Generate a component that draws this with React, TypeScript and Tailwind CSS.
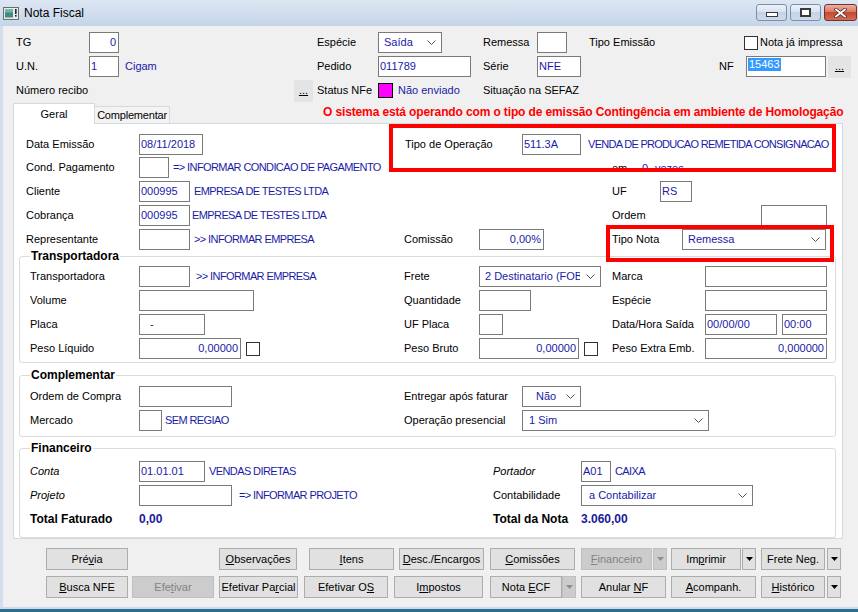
import React from "react";

type P = { w?: string; children?: React.ReactNode; cls?: string };

const VAL = "text-[#1a1aa8]";

function L({ w = "", children, cls = "" }: P) {
  return <div className={`${w} shrink-0 whitespace-nowrap ${cls}`}>{children}</div>;
}

function Inp({ w = "", children, right, cls = "" }: P & { right?: boolean }) {
  return (
    <div
      className={`${w} h-[21px] shrink-0 border border-[#7a7a7a] bg-white flex items-center ${
        right ? "justify-end pr-[2px]" : "pl-[1px]"
      } text-[#1a1aa8] whitespace-nowrap overflow-hidden ${cls}`}
    >
      {children}
    </div>
  );
}

function Chev() {
  return (
    <svg width="9" height="5" viewBox="0 0 9 5">
      <path d="M0.5 0.5 L4.5 4.5 L8.5 0.5" fill="none" stroke="#555" strokeWidth="1" />
    </svg>
  );
}

function Sel({ w = "", children, pl = "pl-[5px]" }: P & { pl?: string }) {
  return (
    <div className={`${w} h-[21px] shrink-0 border border-[#7a7a7a] bg-white flex items-center text-[#1a1aa8]`}>
      <div className={`flex-1 overflow-hidden whitespace-nowrap ${pl}`}>{children}</div>
      <div className="w-[20px] shrink-0 flex justify-center">
        <Chev />
      </div>
    </div>
  );
}

function Desc({ children, cls = "ml-[4px]" }: P) {
  return <span className={`${cls} text-[#1a1aa8] tracking-[-0.6px] whitespace-nowrap`}>{children}</span>;
}

function Chk({ cls = "" }: { cls?: string }) {
  return <div className={`w-[14px] h-[14px] shrink-0 border border-[#333] bg-white ${cls}`} />;
}

function Row({ children, cls = "" }: P) {
  return <div className={`flex items-center h-[21px] ${cls}`}>{children}</div>;
}

function Dots({ w = "w-[23px]", cls = "" }: { w?: string; cls?: string }) {
  return (
    <div className={`${w} h-[22px] shrink-0 bg-[#e4e4e4] flex items-center justify-center ${cls}`}>
      <span className="underline leading-none">...</span>
    </div>
  );
}

function Btn({ w = "", ml = "", children, disabled }: { w: string; ml?: string; children: React.ReactNode; disabled?: boolean }) {
  return (
    <div
      className={`${w} ${ml} h-[22px] shrink-0 flex items-center justify-center whitespace-nowrap border ${
        disabled ? "bg-[#cccccc] border-[#bfbfbf] text-[#838383]" : "bg-[#e1e1e1] border-[#adadad] text-black"
      }`}
    >
      <span className="whitespace-pre">{children}</span>
    </div>
  );
}

function Arrow({ ml = "", disabled }: { ml?: string; disabled?: boolean }) {
  return (
    <div
      className={`w-[14px] ${ml} h-[22px] shrink-0 flex items-center justify-center border ${
        disabled ? "bg-[#cccccc] border-[#bfbfbf]" : "bg-[#e1e1e1] border-[#adadad]"
      }`}
    >
      <svg width="7" height="4" viewBox="0 0 7 4">
        <path d="M0 0 H7 L3.5 4 Z" fill={disabled ? "#8e8e8e" : "#000"} />
      </svg>
    </div>
  );
}

function Group({ title, children, cls = "", inner = "" }: P & { title: string; inner?: string }) {
  return (
    <fieldset className={`ml-[5px] w-[817px] border border-[#dcdcdc] rounded-[3px] ${cls}`}>
      <legend className="ml-[10px] px-[1px] font-bold text-[12px] leading-[13px]">{title}</legend>
      <div className={`pl-[10px] ${inner}`}>{children}</div>
    </fieldset>
  );
}

const U = ({ children }: { children: React.ReactNode }) => <span className="underline">{children}</span>;

export default function App() {
  return (
    <div className="w-[858px] h-[612px] flex flex-col overflow-hidden font-['Liberation_Sans',Arial,sans-serif] text-[11px] text-black">
      {/* Title bar */}
      <div className="h-[26px] shrink-0 flex items-center bg-[linear-gradient(#dde7f3,#c5d5e9)]">
        <svg width="16" height="13" viewBox="0 0 16 13" className="ml-[3px]">
          <rect x="0.5" y="0.5" width="15" height="12" fill="#e9e9e9" stroke="#6d6d6d" />
          <rect x="2" y="2.5" width="8" height="8" fill="#3f8c86" />
          <rect x="2" y="2.5" width="8" height="3" fill="#6fb3ad" />
          <rect x="12" y="2" width="1.6" height="5" fill="#222" />
          <rect x="12" y="8" width="1.6" height="1.6" fill="#222" />
        </svg>
        <span className="ml-[5px] text-[12px] text-black">Nota Fiscal</span>
        <div className="ml-auto flex items-start self-start mt-[4px] mr-[1px]">
          <div className="w-[31px] h-[17px] rounded-[3px] border border-[#7f8ea8] bg-[linear-gradient(#edf2f9_0%,#d9e3f0_45%,#c4d3e7_50%,#cddaeb_100%)] flex items-end justify-center pb-[3px]">
            <svg width="12" height="5" viewBox="0 0 12 5">
              <rect x="0.5" y="0.5" width="11" height="4" fill="#fff" stroke="#3a3a3a" />
            </svg>
          </div>
          <div className="ml-[3px] w-[31px] h-[17px] rounded-[3px] border border-[#7f8ea8] bg-[linear-gradient(#edf2f9_0%,#d9e3f0_45%,#c4d3e7_50%,#cddaeb_100%)] flex items-center justify-center">
            <svg width="11" height="9" viewBox="0 0 11 9">
              <rect x="1" y="1" width="9" height="7" fill="#fff" stroke="#3a3a3a" strokeWidth="2" />
              <rect x="3" y="3.5" width="5" height="2.5" fill="#fff" />
            </svg>
          </div>
          <div className="ml-[3px] w-[33px] h-[17px] rounded-[3px] border border-[#7a3125] bg-[linear-gradient(#eab0a2_0%,#d97a64_45%,#c44a32_50%,#d26c52_100%)] flex items-center justify-center">
            <svg width="13" height="10" viewBox="0 0 13 10">
              <path d="M2 1.5 L11 8.5 M11 1.5 L2 8.5" stroke="#4a2a25" strokeWidth="3.4" strokeLinecap="square" />
              <path d="M2 1.5 L11 8.5 M11 1.5 L2 8.5" stroke="#fff" strokeWidth="1.8" strokeLinecap="square" />
            </svg>
          </div>
        </div>
      </div>

      {/* Body */}
      <div className="flex-1 bg-[#f0f0f0] shadow-[inset_3px_0_0_#d3dfee] flex flex-col pt-[6px]">
        {/* Header row 1 */}
        <Row cls="pl-[16px]">
          <L w="w-[73px]">TG</L>
          <Inp w="w-[30px]" right>
            0
          </Inp>
          <L w="w-[198px]" />
          <L w="w-[61px]">Espécie</L>
          <Sel w="w-[64px]">Saída</Sel>
          <L w="w-[41px]" />
          <L w="w-[54px]">Remessa</L>
          <Inp w="w-[30px]" />
          <L w="w-[22px]" />
          <L w="w-[155px]">Tipo Emissão</L>
          <Chk />
          <L cls="ml-[2px]">Nota já impressa</L>
        </Row>
        {/* Header row 2 */}
        <Row cls="pl-[16px] mt-[3px]">
          <L w="w-[73px]">U.N.</L>
          <Inp w="w-[30px]">1</Inp>
          <L w="w-[198px]" cls={`pl-[6px] ${VAL}`}>
            Cigam
          </L>
          <L w="w-[61px]">Pedido</L>
          <Inp w="w-[93px]">011789</Inp>
          <L w="w-[12px]" />
          <L w="w-[54px]">Série</L>
          <Inp w="w-[44px]">NFE</Inp>
          <L w="w-[138px]" />
          <L w="w-[27px]">NF</L>
          <div className="w-[80px] h-[21px] shrink-0 border border-[#7a7a7a] bg-white flex items-start pt-[1px] pl-[1px]">
            <span className="bg-[#3399ff] text-white leading-[13px] px-[1px]">15463</span>
          </div>
          <Dots cls="ml-[2px]" />
        </Row>
        {/* Header row 3 */}
        <Row cls="pl-[16px] mt-[3px]">
          <L w="w-[278px]">Número recibo</L>
          <Dots w="w-[19px]" />
          <L w="w-[4px]" />
          <L w="w-[61px]">Status NFe</L>
          <div className="w-[15px] h-[15px] shrink-0 border border-black bg-[#ff00ff]" />
          <L w="w-[85px]" cls={`ml-[5px] ${VAL}`}>
            Não enviado
          </L>
          <L>Situação na SEFAZ</L>
        </Row>

        {/* Tabs */}
        <div className="mt-[2px] h-[20px] pl-[13px] flex items-end relative z-10">
          <div className="w-[82px] h-[21px] -mb-[1px] bg-white border border-b-0 border-[#d9d9d9] flex items-center justify-center">
            Geral
          </div>
          <div className="w-[75px] h-[17px] bg-[#f3f3f3] border border-l-0 border-b-0 border-[#d9d9d9] flex items-center justify-center tracking-[-0.2px] whitespace-nowrap">
            Complementar
          </div>
          <div className="self-start mt-[3px] ml-[153px] leading-[13px] font-bold text-[12px] tracking-[-0.13px] text-[#ff0000] whitespace-nowrap">
            O sistema está operando com o tipo de emissão Contingência em ambiente de Homologação
          </div>
        </div>

        {/* Panel */}
        <div className="ml-[13px] w-[830px] h-[416px] shrink-0 border border-[#d3d9e2] bg-white relative pt-[10px]">
          <div className="pl-[12px]">
            <Row>
              <L w="w-[113px]">Data Emissão</L>
              <Inp w="w-[64px]">08/11/2018</Inp>
              <L w="w-[202px]" />
              <L w="w-[117px]">Tipo de Operação</L>
              <Inp w="w-[59px]">511.3A</Inp>
              <span className="ml-[7px] text-[#1a1aa8] tracking-[-0.7px] whitespace-nowrap">
                VENDA DE PRODUCAO REMETIDA CONSIGNACAO
              </span>
            </Row>
            <Row cls="mt-[2px]">
              <div className="w-[586px] shrink-0 flex items-center">
                <L w="w-[113px]">Cond. Pagamento</L>
                <Inp w="w-[30px]" />
                <Desc>=&gt; INFORMAR CONDICAO DE PAGAMENTO</Desc>
              </div>
              <L w="w-[30px]" cls="mt-[1px]">
                em
              </L>
              <L w="w-[13px]" cls={`mt-[1px] ${VAL}`}>
                0
              </L>
              <L cls={`mt-[1px] ${VAL}`}>vezes</L>
            </Row>
            <Row cls="mt-[3px]">
              <div className="w-[586px] shrink-0 flex items-center">
                <L w="w-[113px]">Cliente</L>
                <Inp w="w-[51px]">000995</Inp>
                <Desc>EMPRESA DE TESTES LTDA</Desc>
              </div>
              <L w="w-[48px]">UF</L>
              <Inp w="w-[32px]">RS</Inp>
            </Row>
            <Row cls="mt-[3px]">
              <div className="w-[586px] shrink-0 flex items-center">
                <L w="w-[113px]">Cobrança</L>
                <Inp w="w-[51px]">000995</Inp>
                <Desc cls="ml-[2px] -mt-[1px]">EMPRESA DE TESTES LTDA</Desc>
              </div>
              <L w="w-[149px]">Ordem</L>
              <Inp w="w-[66px]" />
            </Row>
            <Row cls="mt-[3px]">
              <div className="w-[378px] shrink-0 flex items-center">
                <L w="w-[113px]">Representante</L>
                <Inp w="w-[51px]" />
                <Desc cls="ml-[4px] -mt-[1px]">&gt;&gt; INFORMAR EMPRESA</Desc>
              </div>
              <L w="w-[75px]">Comissão</L>
              <Inp w="w-[65px]" right>
                0,00%
              </Inp>
              <L w="w-[68px]" />
              <L w="w-[70px]">Tipo Nota</L>
              <Sel w="w-[144px]">Remessa</Sel>
            </Row>
          </div>

          <Group title="Transportadora" inner="pt-[3px] pb-[3px]">
            <Row>
              <div className="w-[374px] shrink-0 flex items-center">
                <L w="w-[109px]">Transportadora</L>
                <Inp w="w-[51px]" />
                <Desc cls="ml-[6px]">&gt;&gt; INFORMAR EMPRESA</Desc>
              </div>
              <L w="w-[75px]">Frete</L>
              <Sel w="w-[122px]">2 Destinatario (FOB)</Sel>
              <L w="w-[11px]" />
              <L w="w-[93px]">Marca</L>
              <Inp w="w-[122px]" />
            </Row>
            <Row cls="mt-[3px]">
              <div className="w-[374px] shrink-0 flex items-center">
                <L w="w-[109px]">Volume</L>
                <Inp w="w-[115px]" />
              </div>
              <L w="w-[75px]">Quantidade</L>
              <Inp w="w-[52px]" />
              <L w="w-[81px]" />
              <L w="w-[93px]">Espécie</L>
              <Inp w="w-[122px]" />
            </Row>
            <Row cls="mt-[3px]">
              <div className="w-[374px] shrink-0 flex items-center">
                <L w="w-[109px]">Placa</L>
                <Inp w="w-[66px]" cls="pl-[10px]">
                  -
                </Inp>
              </div>
              <L w="w-[75px]">UF Placa</L>
              <Inp w="w-[24px]" />
              <L w="w-[109px]" />
              <L w="w-[93px]">Data/Hora Saída</L>
              <Inp w="w-[72px]">00/00/00</Inp>
              <Inp w="w-[45px]" cls="ml-[5px]">
                00:00
              </Inp>
            </Row>
            <Row cls="mt-[3px]">
              <div className="w-[374px] shrink-0 flex items-center">
                <L w="w-[109px]">Peso Líquido</L>
                <Inp w="w-[102px]" right>
                  0,00000
                </Inp>
                <Chk cls="ml-[5px]" />
              </div>
              <L w="w-[75px]">Peso Bruto</L>
              <Inp w="w-[100px]" right>
                0,00000
              </Inp>
              <Chk cls="ml-[5px]" />
              <L w="w-[14px]" />
              <L w="w-[93px]">Peso Extra Emb.</L>
              <Inp w="w-[122px]" right>
                0,000000
              </Inp>
            </Row>
          </Group>

          <Group title="Complementar" cls="mt-[6px]" inner="pt-[4px] pb-[5px]">
            <Row>
              <div className="w-[374px] shrink-0 flex items-center">
                <L w="w-[109px]">Ordem de Compra</L>
                <Inp w="w-[93px]" />
              </div>
              <L w="w-[118px]">Entregar após faturar</L>
              <Sel w="w-[59px]" pl="pl-[13px]">
                Não
              </Sel>
            </Row>
            <Row cls="mt-[3px]">
              <div className="w-[374px] shrink-0 flex items-center">
                <L w="w-[109px]">Mercado</L>
                <Inp w="w-[23px]" />
                <Desc cls="ml-[3px]">SEM REGIAO</Desc>
              </div>
              <L w="w-[118px]">Operação presencial</L>
              <Sel w="w-[187px]" pl="pl-[6px]">
                1 Sim
              </Sel>
            </Row>
          </Group>

          <Group title="Financeiro" cls="mt-[5px]" inner="pt-[6px] pb-[8px]">
            <Row>
              <div className="w-[463px] shrink-0 flex items-center">
                <L w="w-[109px]" cls="italic">
                  Conta
                </L>
                <Inp w="w-[66px]">01.01.01</Inp>
                <Desc>VENDAS DIRETAS</Desc>
              </div>
              <L w="w-[88px]" cls="italic">
                Portador
              </L>
              <Inp w="w-[30px]">A01</Inp>
              <Desc>CAIXA</Desc>
            </Row>
            <Row cls="mt-[3px]">
              <div className="w-[463px] shrink-0 flex items-center">
                <L w="w-[109px]" cls="italic">
                  Projeto
                </L>
                <Inp w="w-[93px]" />
                <Desc cls="ml-[7px]">=&gt; INFORMAR PROJETO</Desc>
              </div>
              <L w="w-[88px]">Contabilidade</L>
              <Sel w="w-[172px]" pl="pl-[7px]">
                a Contabilizar
              </Sel>
            </Row>
            <Row cls="mt-[2px] font-bold text-[12px]">
              <div className="w-[463px] shrink-0 flex items-center">
                <L w="w-[109px]">Total Faturado</L>
                <L cls="text-[#1a1a9a]">0,00</L>
              </div>
              <L w="w-[88px]">Total da Nota</L>
              <L cls="text-[#1a1a9a]">3.060,00</L>
            </Row>
          </Group>

          {/* Red highlight boxes */}
          <div className="absolute left-[375px] top-[0px] w-[447px] h-[48px] border-[4px] border-[#ff0000] pointer-events-none z-20" />
          <div className="absolute left-[592px] top-[101px] w-[228px] h-[37px] border-[4px] border-[#ff0000] pointer-events-none z-20" />
        </div>

        {/* Buttons row 1 */}
        <div className="mt-[9px] pl-[46px] flex">
          <Btn w="w-[82px]">
            Pré<U>v</U>ia
          </Btn>
          <Btn w="w-[78px]" ml="ml-[91px]">
            <U>O</U>bservações
          </Btn>
          <Btn w="w-[85px]" ml="ml-[12px]">
            <U>I</U>tens
          </Btn>
          <Btn w="w-[85px]" ml="ml-[5px]">
            <U>D</U>esc./Encargos
          </Btn>
          <Btn w="w-[85px]" ml="ml-[6px]">
            <U>C</U>omissões
          </Btn>
          <Btn w="w-[71px]" ml="ml-[6px]" disabled>
            <U>F</U>inanceiro
          </Btn>
          <Arrow ml="ml-[1px]" disabled />
          <Btn w="w-[70px]" ml="ml-[4px]">
            Im<U>p</U>rimir
          </Btn>
          <Arrow ml="ml-[1px]" />
          <Btn w="w-[64px]" ml="ml-[5px]">
            Frete Neg.
          </Btn>
          <Arrow ml="ml-[2px]" />
        </div>
        {/* Buttons row 2 */}
        <div className="mt-[6px] pl-[46px] flex">
          <Btn w="w-[82px]">
            <U>B</U>usca NFE
          </Btn>
          <Btn w="w-[82px]" ml="ml-[4px]" disabled>
            Efe<U>t</U>ivar
          </Btn>
          <Btn w="w-[79px]" ml="ml-[5px]">
            Efetivar Pa<U>r</U>cial
          </Btn>
          <Btn w="w-[84px]" ml="ml-[6px]">
            Efetivar O<U>S</U>
          </Btn>
          <Btn w="w-[89px]" ml="ml-[6px]">
            I<U>m</U>postos
          </Btn>
          <Btn w="w-[72px]" ml="ml-[7px]">
            {"Nota "}
            <U>E</U>CF
          </Btn>
          <Arrow disabled />
          <Btn w="w-[85px]" ml="ml-[5px]">
            {"Anular "}
            <U>N</U>F
          </Btn>
          <Btn w="w-[85px]" ml="ml-[5px]">
            <U>A</U>companh.
          </Btn>
          <Btn w="w-[64px]" ml="ml-[5px]">
            <U>H</U>istórico
          </Btn>
          <Arrow ml="ml-[2px]" />
        </div>
      </div>

      {/* Bottom frame */}
      <div className="h-[2px] shrink-0 bg-[#cddbec]" />
      <div className="h-[3px] shrink-0 bg-[#2a6e8e]" />
    </div>
  );
}
